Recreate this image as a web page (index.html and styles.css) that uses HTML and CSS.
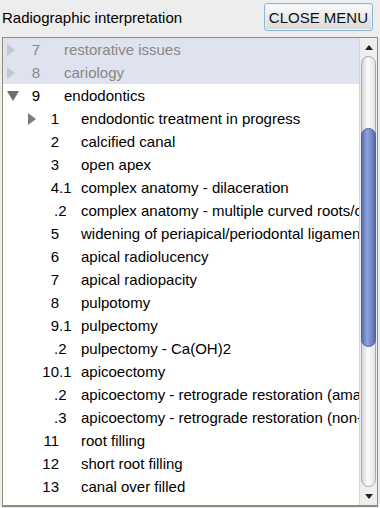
FILE: index.html
```
<!DOCTYPE html>
<html lang="en">
<head>
    <meta charset="UTF-8">
    <meta name="viewport" content="width=device-width, initial-scale=1.0">
    <title>Radiographic interpretation</title>
    <link rel="stylesheet" href="styles.css">
</head>
<body>
    <div class="header">
        <span class="title">Radiographic interpretation</span>
        <button class="close-btn">CLOSE MENU</button>
    </div>

    <!-- Tree panel -->
    <div class="panel">
        <div class="tree">
            <div class="row lvl0 muted"><span class="tog"><i class="arrow-right"></i></span><span class="num"><span class="int">7</span></span><span class="label">restorative issues</span></div>
            <div class="row lvl0 muted"><span class="tog"><i class="arrow-right"></i></span><span class="num"><span class="int">8</span></span><span class="label">cariology</span></div>
            <div class="row lvl0"><span class="tog"><i class="arrow-down"></i></span><span class="num"><span class="int">9</span></span><span class="label">endodontics</span></div>
            <div class="row lvl1"><span class="tog"><i class="arrow-right"></i></span><span class="num"><span class="int">1</span></span><span class="label">endodontic treatment in progress</span></div>
            <div class="row lvl1"><span class="tog"></span><span class="num"><span class="int">2</span></span><span class="label">calcified canal</span></div>
            <div class="row lvl1"><span class="tog"></span><span class="num"><span class="int">3</span></span><span class="label">open apex</span></div>
            <div class="row lvl1"><span class="tog"></span><span class="num"><span class="int">4</span>.1</span><span class="label">complex anatomy - dilaceration</span></div>
            <div class="row lvl1"><span class="tog"></span><span class="num"><span class="int"></span><span class="sub">.2</span></span><span class="label">complex anatomy - multiple curved roots/canals</span></div>
            <div class="row lvl1"><span class="tog"></span><span class="num"><span class="int">5</span></span><span class="label">widening of periapical/periodontal ligament space</span></div>
            <div class="row lvl1"><span class="tog"></span><span class="num"><span class="int">6</span></span><span class="label">apical radiolucency</span></div>
            <div class="row lvl1"><span class="tog"></span><span class="num"><span class="int">7</span></span><span class="label">apical radiopacity</span></div>
            <div class="row lvl1"><span class="tog"></span><span class="num"><span class="int">8</span></span><span class="label">pulpotomy</span></div>
            <div class="row lvl1"><span class="tog"></span><span class="num"><span class="int">9</span>.1</span><span class="label">pulpectomy</span></div>
            <div class="row lvl1"><span class="tog"></span><span class="num"><span class="int"></span><span class="sub">.2</span></span><span class="label">pulpectomy - Ca(OH)2</span></div>
            <div class="row lvl1"><span class="tog"></span><span class="num"><span class="int">10</span>.1</span><span class="label">apicoectomy</span></div>
            <div class="row lvl1"><span class="tog"></span><span class="num"><span class="int"></span><span class="sub">.2</span></span><span class="label">apicoectomy - retrograde restoration (amalgam)</span></div>
            <div class="row lvl1"><span class="tog"></span><span class="num"><span class="int"></span><span class="sub">.3</span></span><span class="label">apicoectomy - retrograde restoration (non-amalgam)</span></div>
            <div class="row lvl1"><span class="tog"></span><span class="num"><span class="int">11</span></span><span class="label">root filling</span></div>
            <div class="row lvl1"><span class="tog"></span><span class="num"><span class="int">12</span></span><span class="label">short root filling</span></div>
            <div class="row lvl1"><span class="tog"></span><span class="num"><span class="int">13</span></span><span class="label">canal over filled</span></div>
        </div>

        <div class="scrollbar">
            <div class="sb-btn"><i class="sb-up"></i></div>
            <div class="sb-track">
                <div class="sb-thumb"></div>
            </div>
            <div class="sb-btn"><i class="sb-down"></i></div>
        </div>
    </div>
</body>
</html>
```

FILE: styles.css
```
    body {
        font-family: "Liberation Sans", Arial, sans-serif;
        font-size: 15px;
        margin: 0;
        background-color: #ededed;
        color: #000;
        height: 508px;
        overflow: hidden;
    }

    .header {
        display: flex;
        align-items: center;
        justify-content: space-between;
        height: 34px;
        padding: 0 7px 3px 2px;
    }

    .title {
        line-height: 17px;
    }

    .close-btn {
        font-family: "Liberation Sans", Arial, sans-serif;
        font-size: 15px;
        height: 28px;
        padding: 0 4px;
        border: 1px solid #86b6d8;
        border-radius: 3px;
        background: linear-gradient(#fbfbfb, #e6e6e6 60%, #d9d9d9);
        color: #111;
        box-shadow: inset 0 0 0 1px #e8f2fa;
        cursor: pointer;
    }

    /* Tree panel */
    .panel {
        display: flex;
        margin: 0 2px;
        height: 467px;
        border: 1px solid #928b78;
        border-bottom-width: 2px;
        background-color: #fff;
    }

    .tree {
        flex: 1;
        overflow: hidden;
    }

    .row {
        display: flex;
        align-items: center;
        height: 23px;
        white-space: nowrap;
    }

    .row.muted {
        background-color: #dfe3ef;
        color: #8a8784;
    }

    .tog {
        display: flex;
        align-items: center;
        flex-shrink: 0;
    }

    .num {
        flex-shrink: 0;
    }

    .int {
        display: inline-block;
        text-align: right;
    }

    .sub {
        margin-left: -5px;
    }

    .lvl0 { padding-left: 4px; }
    .lvl0 .tog { width: 14px; }
    .lvl0 .num { width: 43px; }
    .lvl0 .int { width: 19px; }

    .lvl1 { padding-left: 25px; }
    .lvl1 .tog { width: 13px; }
    .lvl1 .num { width: 40px; }
    .lvl1 .int { width: 18px; }

    .arrow-right {
        width: 0;
        height: 0;
        border-top: 6px solid transparent;
        border-bottom: 6px solid transparent;
        border-left: 8px solid #7b7b7b;
    }

    .muted .arrow-right {
        border-left-color: #c6c6c8;
    }

    .arrow-down {
        width: 0;
        height: 0;
        margin-top: 1px;
        border-left: 6px solid transparent;
        border-right: 6px solid transparent;
        border-top: 10px solid #6e6e6e;
    }

    /* Scrollbar */
    .scrollbar {
        width: 17px;
        display: flex;
        flex-direction: column;
        background-color: #eeeeee;
        border-left: 1px solid #d4d4d4;
    }

    .sb-btn {
        height: 18px;
        display: flex;
        align-items: center;
        justify-content: center;
        flex-shrink: 0;
    }

    .sb-up {
        width: 0;
        height: 0;
        border-left: 4px solid transparent;
        border-right: 4px solid transparent;
        border-bottom: 5px solid #222;
    }

    .sb-down {
        width: 0;
        height: 0;
        border-left: 4px solid transparent;
        border-right: 4px solid transparent;
        border-top: 5px solid #222;
    }

    .sb-track {
        flex: 1;
        margin: 0 1px;
        padding-top: 71px;
        border: 1px solid #a9a9a9;
        border-radius: 8px;
        background: linear-gradient(to right, #d6d6d6, #fbfbfb 45%, #e4e4e4);
    }

    .sb-thumb {
        height: 217px;
        margin: 0 -1px;
        border: 1px solid #4d5f98;
        border-radius: 8px;
        background: linear-gradient(to right, #5b70b4, #8ea3da 40%, #6e86c8 75%, #5468a8);
    }
```
